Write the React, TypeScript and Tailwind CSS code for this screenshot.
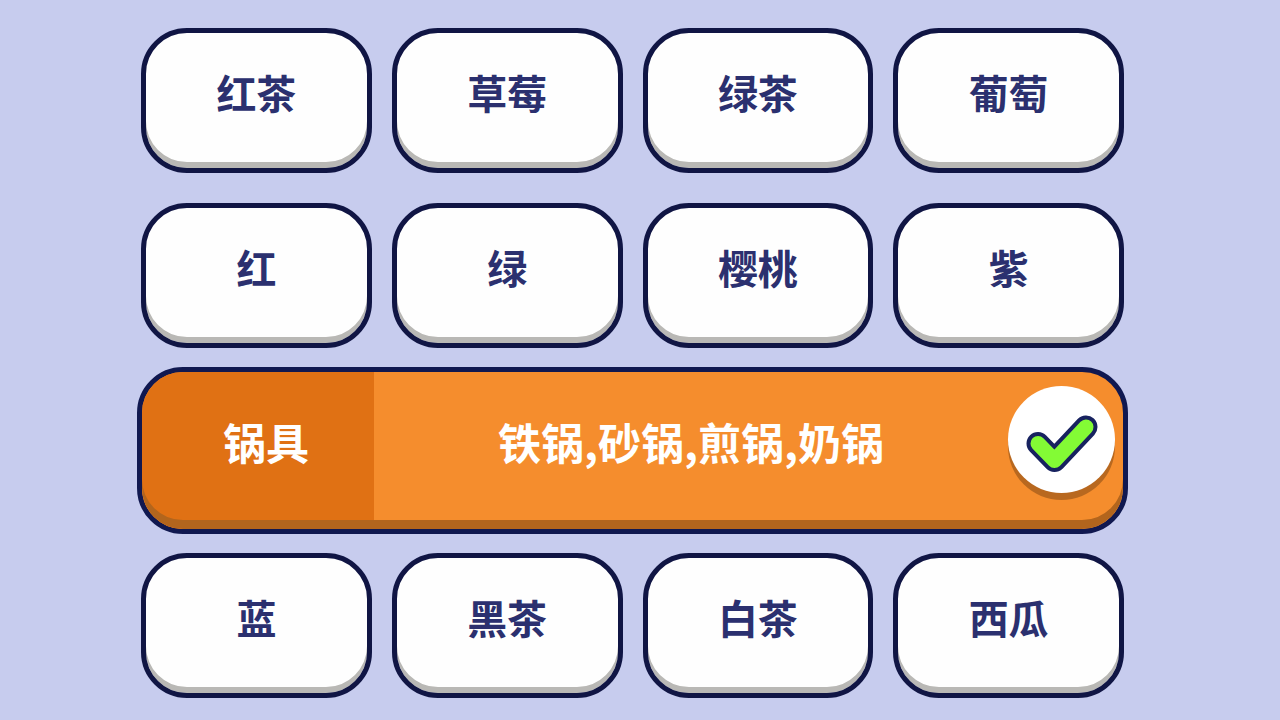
type Row =
  | { kind: "words"; words: string[] }
  | { kind: "solved"; category: string; words: string[] };

const groups: Row[][] = [
  [
    { kind: "words", words: ["红茶", "草莓", "绿茶", "葡萄"] },
    { kind: "words", words: ["红", "绿", "樱桃", "紫"] },
  ],
  [{ kind: "solved", category: "锅具", words: ["铁锅", "砂锅", "煎锅", "奶锅"] }],
  [{ kind: "words", words: ["蓝", "黑茶", "白茶", "西瓜"] }],
];

function WordRow({ words }: { words: string[] }) {
  return (
    <div className="grid grid-cols-4 gap-5 px-1">
      {words.map((word) => (
        <button
          key={word}
          type="button"
          className="flex cursor-pointer items-center justify-center rounded-[46px] border-5 border-[#101544] bg-[#fefefe] pt-[34px] pb-[50px] text-[40px] leading-[51px] font-bold text-[#2b306f] shadow-[inset_0_-6px_0_#b9b8b5]"
        >
          {word}
        </button>
      ))}
    </div>
  );
}

function CheckMark() {
  return (
    <svg viewBox="0 0 72 58" className="w-[72px]" fill="none" strokeLinecap="round" strokeLinejoin="round" aria-hidden="true">
      <path d="M12 28.5 L28.5 45.5 L60 12" stroke="#17225f" strokeWidth="23" />
      <path d="M12 28.5 L28.5 45.5 L60 12" stroke="#83fb35" strokeWidth="15" />
    </svg>
  );
}

function SolvedRow({ category, words }: { category: string; words: string[] }) {
  return (
    <section className="relative flex overflow-hidden rounded-[46px] border-5 border-[#101850] bg-[#f58d2d] text-[43px] leading-[62px] font-bold text-white">
      <h2 className="flex w-[232px] items-center justify-center bg-[#e07114] pt-[38px] pb-[57px] pl-4">{category}</h2>
      <p className="flex flex-1 items-center justify-center pt-[38px] pb-[57px]">{words.join(",")}</p>
      <div className="z-10 mt-3.5 mr-2 flex size-[107px] items-center justify-center rounded-full bg-white pt-2 shadow-[0_7px_0_#b8681f]">
        <CheckMark />
      </div>
      {/* bottom lip across both halves */}
      <div className="pointer-events-none absolute inset-0 rounded-[41px] shadow-[inset_0_-9px_0_#b2651d]" />
    </section>
  );
}

export default function App() {
  return (
    <main className="flex min-h-screen justify-center bg-[#c7ccee] pt-7 pr-[15px] pb-5 font-['Noto_Sans_CJK_SC',sans-serif]">
      <div className="flex w-full max-w-[991px] flex-col gap-[19px]">
        {groups.map((rows, i) => (
          <div key={i} className="flex flex-col gap-[30px]">
            {rows.map((row) =>
              row.kind === "solved" ? (
                <SolvedRow key={row.category} category={row.category} words={row.words} />
              ) : (
                <WordRow key={row.words[0]} words={row.words} />
              ),
            )}
          </div>
        ))}
      </div>
    </main>
  );
}
